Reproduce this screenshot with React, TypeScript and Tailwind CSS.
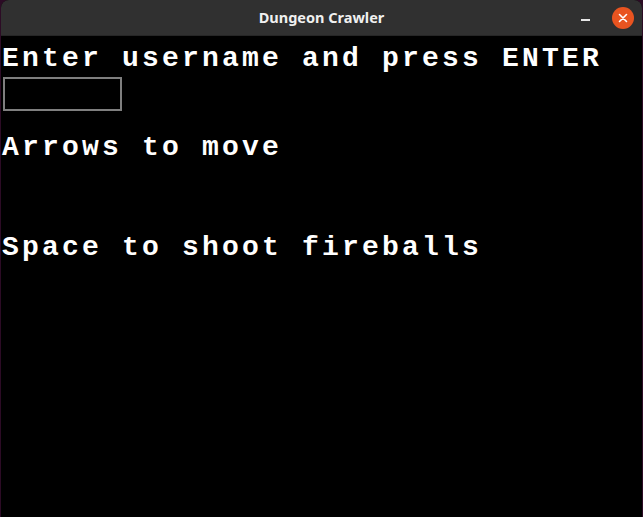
export default function App() {
  return (
    <div className="w-[643px] h-[517px] bg-[#2c0b25] px-px overflow-hidden">
      <div className="flex flex-col h-full bg-black rounded-t-[8px] overflow-hidden">
        {/* title bar */}
        <div className="relative flex items-center justify-center h-[36px] bg-[#303030] border-b border-[#262626] shrink-0">
          <span className="text-[14.5px] font-bold text-[#f0f0f0] font-['Noto_Sans',sans-serif]">
            Dungeon Crawler
          </span>
          <div className="absolute right-[8px] top-0 h-full flex items-center gap-[22px]">
            <span className="block w-[9px] h-[2px] bg-[#e6e6e6] mt-[5px]" />
            <span className="flex items-center justify-center w-[22px] h-[22px] rounded-full bg-[#e95420]">
              <svg width="10" height="10" viewBox="0 0 10 10">
                <path d="M1.5 1.5 L8.5 8.5 M8.5 1.5 L1.5 8.5" stroke="#fff" strokeWidth="1.6" strokeLinecap="round" />
              </svg>
            </span>
          </div>
        </div>

        {/* game screen */}
        <div className="flex flex-col items-start pt-[9px] pl-[1px] text-white font-['Liberation_Mono',monospace] font-bold text-[28px] leading-[28px] tracking-[3.2px] whitespace-pre">
          <p>Enter username and press ENTER</p>
          <div className="mt-[4px] ml-[1px] w-[119px] h-[34px] border-2 border-[#7f7f7f]" />
          <p className="mt-[23px]">Arrows to move</p>
          <p className="mt-[72px]">Space to shoot fireballs</p>
        </div>
      </div>
    </div>
  );
}
